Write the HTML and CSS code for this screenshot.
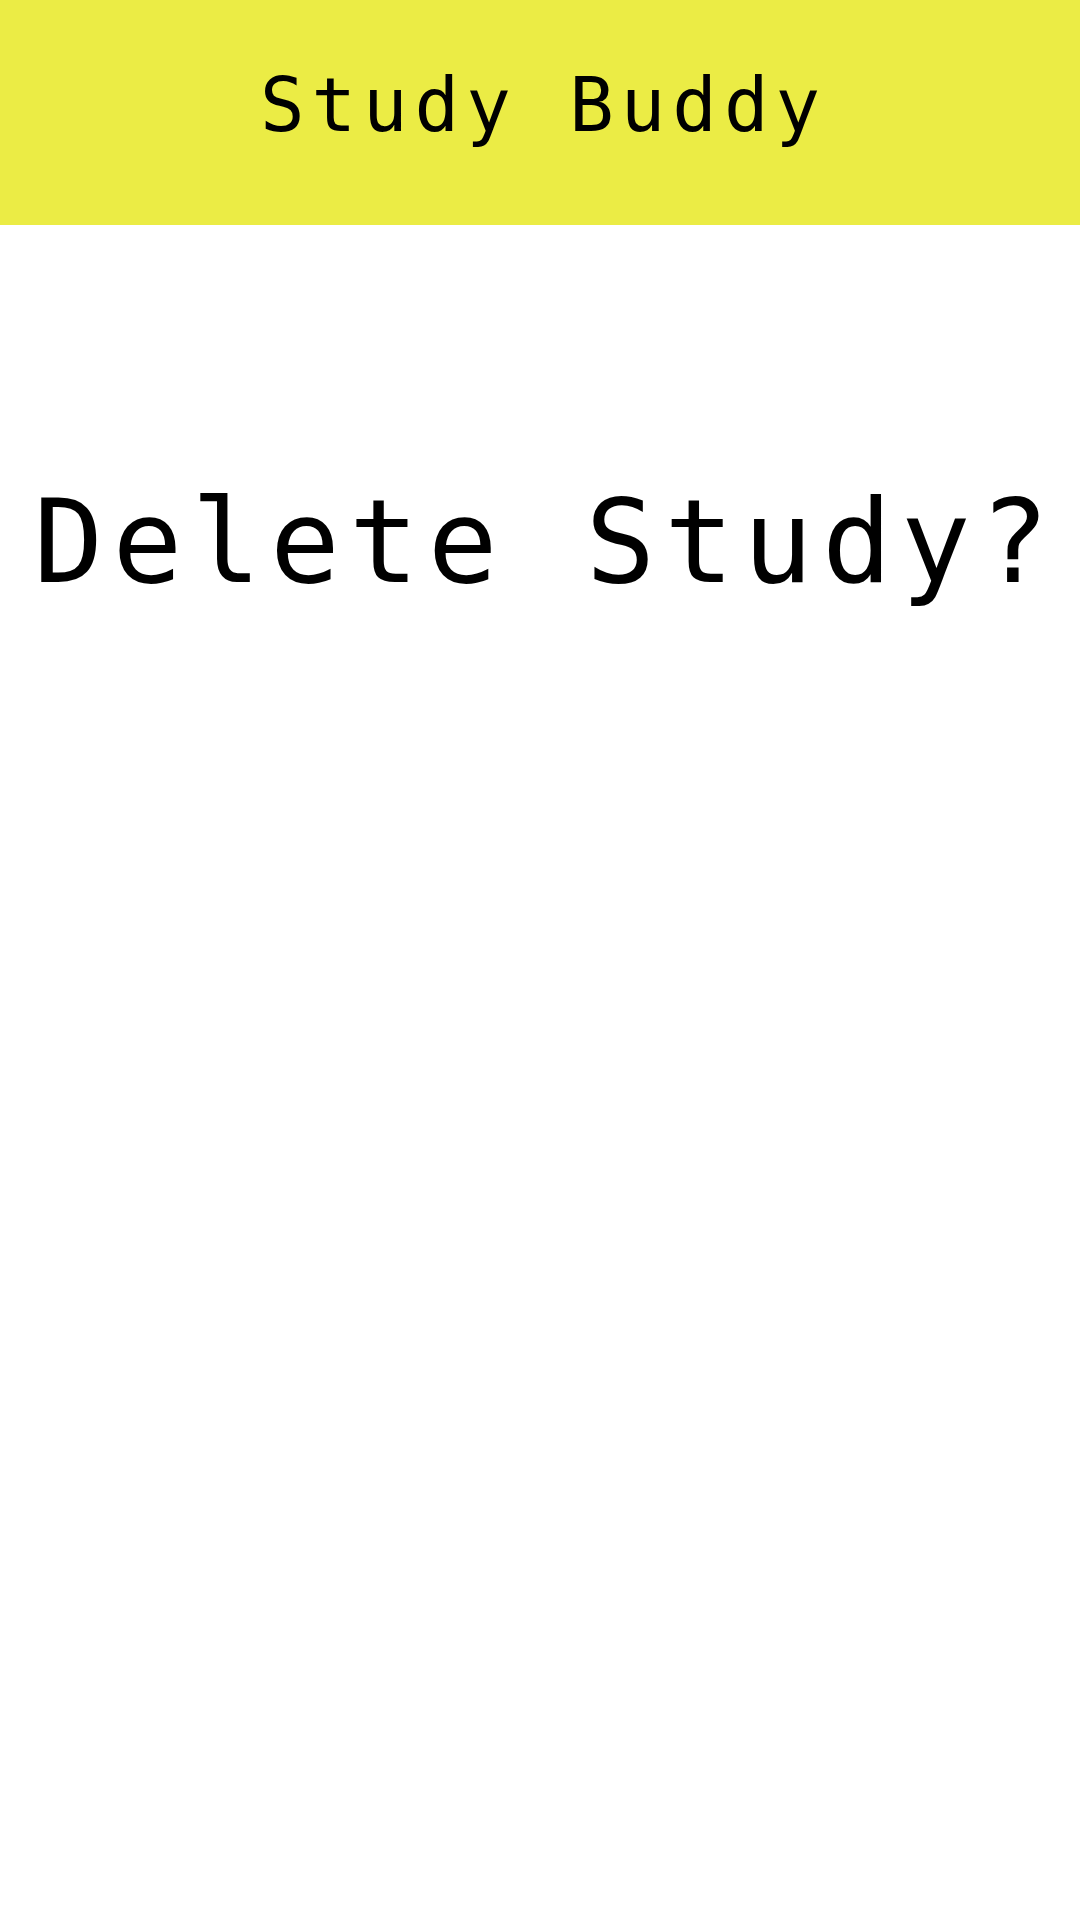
FILE: index.html
```
<!DOCTYPE html>
<html>
<head>
<meta charset="utf-8">
<link rel="stylesheet" href="styles.css">
</head>
<body>
<header class="topbar">
  <h1 class="brand">Study Buddy</h1>
</header>
<main class="content">
  <h2 class="question">Delete Study?</h2>
</main>
</body>
</html>
```
FILE: styles.css
```
html, body {
  margin: 0;
  padding: 0;
  background: #ffffff;
  width: 1080px;
  height: 1920px;
  overflow: hidden;
}
body {
  font-family: "DejaVu Sans Mono", "Liberation Mono", monospace;
  color: #000;
}
.topbar {
  height: 225px;
  background: #ebec45;
  display: flex;
  align-items: center;
  justify-content: center;
}
.brand {
  margin: 0;
  font-weight: normal;
  font-size: 74px;
  letter-spacing: 7px;
  line-height: 1;
  padding-left: 7px;
  padding-bottom: 16px;
}
.content {
  display: flex;
  justify-content: center;
  padding-top: 259px;
}
.question {
  margin: 0;
  font-weight: normal;
  font-size: 116px;
  letter-spacing: 9px;
  line-height: 1;
  white-space: nowrap;
  padding-left: 12px;
}
```
